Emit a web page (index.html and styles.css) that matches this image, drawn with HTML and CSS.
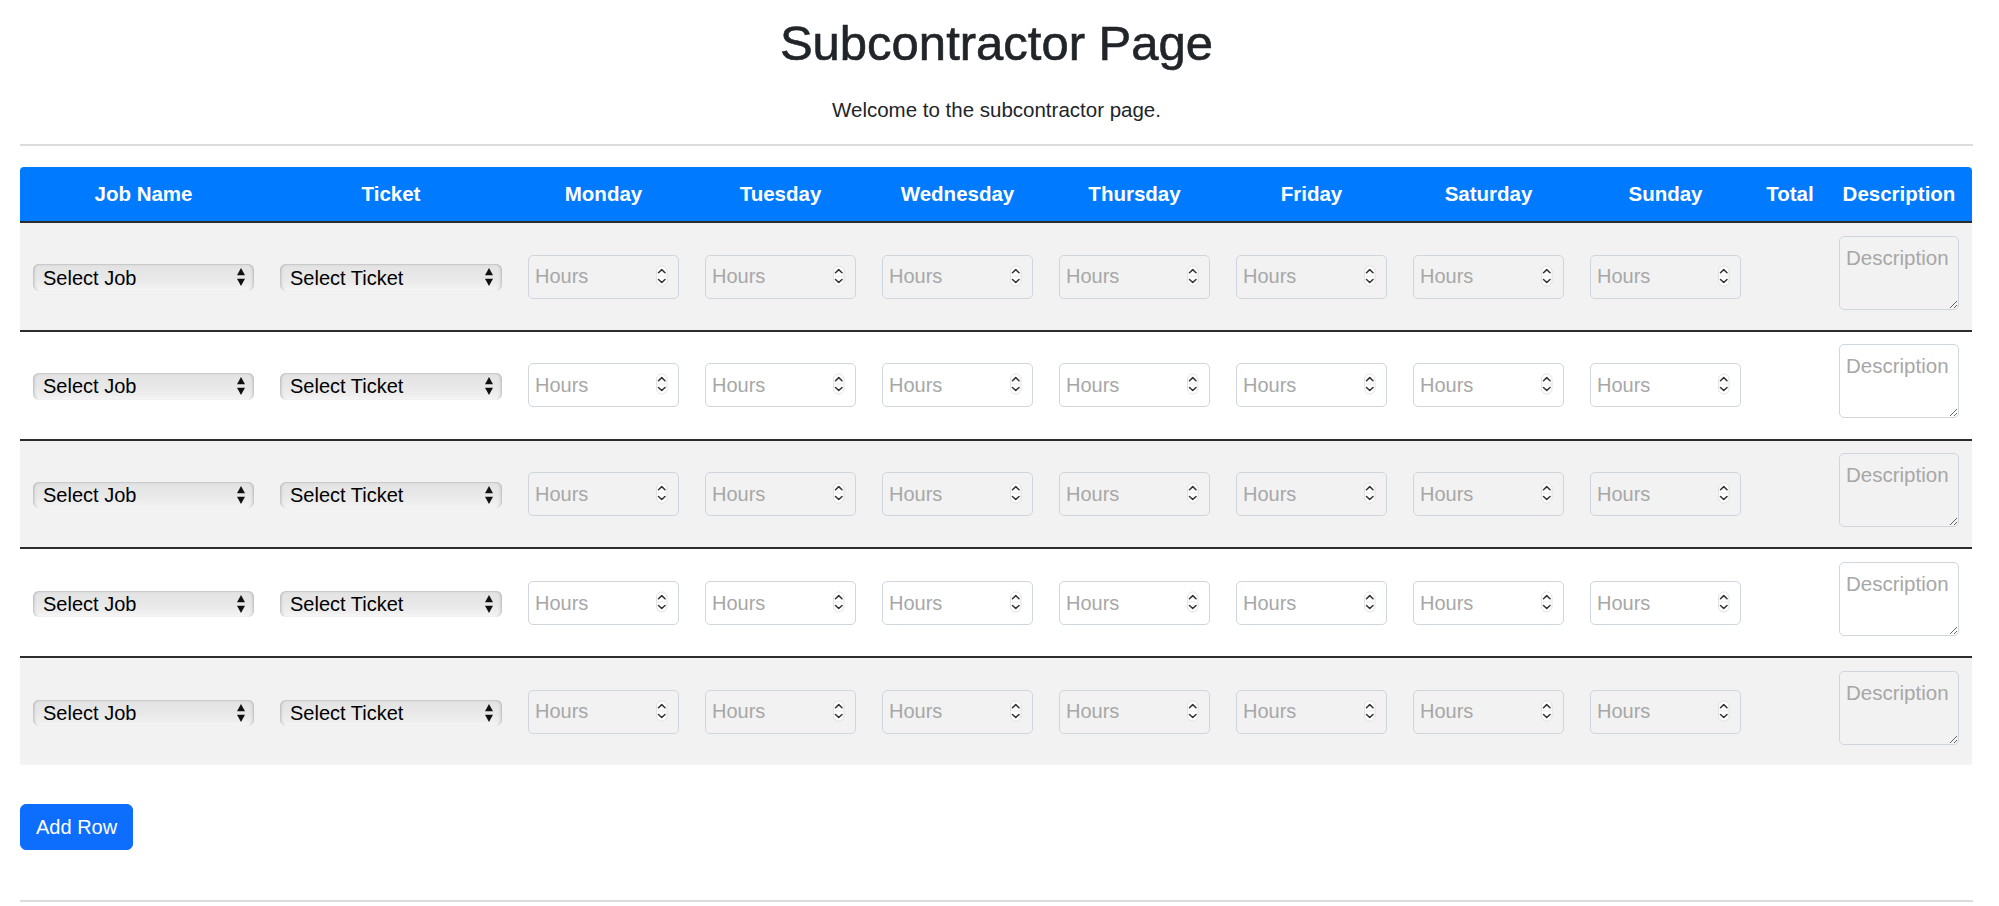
FILE: index.html
```html
<!DOCTYPE html>
<html lang="en">
<head>
<meta charset="utf-8">
<title>Subcontractor Page</title>
<link rel="stylesheet" href="styles.css">
</head>
<body>
<div class="page">
  <h1 class="title">Subcontractor Page</h1>
  <p class="lead">Welcome to the subcontractor page.</p>
  <hr class="rule rule-top">

  <div class="table-wrap">
    <table class="timesheet">
      <colgroup>
        <col class="c-job"><col class="c-ticket">
        <col class="c-day"><col class="c-day"><col class="c-day"><col class="c-day"><col class="c-day"><col class="c-day"><col class="c-day">
        <col class="c-total"><col class="c-desc">
      </colgroup>
      <thead>
        <tr>
          <th>Job Name</th><th>Ticket</th><th>Monday</th><th>Tuesday</th><th>Wednesday</th><th>Thursday</th><th>Friday</th><th>Saturday</th><th>Sunday</th><th>Total</th><th>Description</th>
        </tr>
      </thead>
      <tbody id="rows"></tbody>
    </table>
  </div>

  <button class="btn-add" type="button">Add Row</button>
  <hr class="rule rule-bottom">
</div>

<template id="row-tpl">
  <tr>
    <td><span class="sel-wrap"><select class="sel"><option>Select Job</option></select><svg class="sel-arrows" viewBox="0 0 8 18" width="8" height="18"><polygon points="0,7.2 4,0 8,7.2" fill="#111"/><polygon points="0,10.8 8,10.8 4,18" fill="#111"/></svg></span></td>
    <td><span class="sel-wrap"><select class="sel"><option>Select Ticket</option></select><svg class="sel-arrows" viewBox="0 0 8 18" width="8" height="18"><polygon points="0,7.2 4,0 8,7.2" fill="#111"/><polygon points="0,10.8 8,10.8 4,18" fill="#111"/></svg></span></td>
    <td class="day"></td><td class="day"></td><td class="day"></td><td class="day"></td><td class="day"></td><td class="day"></td><td class="day"></td>
    <td class="total"></td>
    <td class="desc"><textarea class="desc-input" placeholder="Description"></textarea></td>
  </tr>
</template>

<template id="hours-tpl">
  <span class="num-wrap"><input class="num" type="number" placeholder="Hours"><svg class="spin" viewBox="0 0 12 22" width="12" height="22"><rect x="0.5" y="0.5" width="11" height="21" rx="5.5" fill="#fff" stroke="#d4d4d4" stroke-width="0.7"/><line x1="1.5" y1="11" x2="10.5" y2="11" stroke="#e2e2e2" stroke-width="0.8"/><polyline points="2.6,7.6 6,4.4 9.4,7.6" fill="none" stroke="#333" stroke-width="1.6" stroke-linecap="round" stroke-linejoin="round"/><polyline points="2.6,14.6 6,17.8 9.4,14.6" fill="none" stroke="#333" stroke-width="1.6" stroke-linecap="round" stroke-linejoin="round"/></svg></span>
</template>

<script src="script.js"></script>
</body>
</html>
```

FILE: script.js
```javascript
(function () {
  var body = document.getElementById('rows');
  var rowTpl = document.getElementById('row-tpl');
  var hoursTpl = document.getElementById('hours-tpl');
  function addRow() {
    var row = rowTpl.content.firstElementChild.cloneNode(true);
    row.querySelectorAll('td.day').forEach(function (td) {
      td.appendChild(hoursTpl.content.firstElementChild.cloneNode(true));
    });
    body.appendChild(row);
  }
  for (var i = 0; i < 5; i++) addRow();
  document.querySelector('.btn-add').addEventListener('click', addRow);
})();
```

FILE: styles.css
```css
* { box-sizing: border-box; }

html, body {
  margin: 0;
  padding: 0;
  background: #ffffff;
}

body {
  font-family: "Liberation Sans", Arial, sans-serif;
  color: #212529;
}

.page {
  margin-left: 20px;
  width: 1953px;
  display: flex;
  flex-direction: column;
}

.title {
  margin: 13.5px 0 0;
  font-size: 49px;
  line-height: 59px;
  font-weight: 400;
  text-align: center;
  color: #212529;
  -webkit-text-stroke: 0.6px #212529;
}

.lead {
  margin: 22px 0 0;
  font-size: 20.5px;
  line-height: 30px;
  text-align: center;
}

.rule {
  width: 100%;
  height: 0;
  margin: 0;
  border: 0;
  border-top: 2px solid #dcdcdc;
}

.rule-top { margin-top: 19px; }
.rule-bottom { margin-top: 50px; }

.table-wrap {
  margin-top: 21.5px;
  width: 1952px;
  border-radius: 4px 4px 3px 3px;
  overflow: hidden;
}

.timesheet {
  width: 1952px;
  table-layout: fixed;
  border-collapse: separate;
  border-spacing: 0;
}

.c-job { width: 247px; }
.c-ticket { width: 248px; }
.c-day { width: 177px; }
.c-total { width: 72px; }
.c-desc { width: 146px; }

.timesheet th {
  background: #007bff;
  color: #ffffff;
  font-weight: 700;
  font-size: 20.5px;
  line-height: 30px;
  padding: 12px 4px;
  text-align: center;
  white-space: nowrap;
}

.timesheet td {
  padding: 12.5px 13px 12px;
  vertical-align: middle;
  border-top: 2px solid #2d2d2d;
  background: #ffffff;
}

.timesheet tbody tr:nth-child(odd) td { background: #f2f2f2; }

/* select */
.sel-wrap {
  position: relative;
  display: block;
  width: 100%;
  margin-top: 2px;
}

.sel {
  display: block;
  width: 100%;
  height: 26.5px;
  margin: 0;
  padding: 0 22px 0 10px;
  -webkit-appearance: none;
  appearance: none;
  border: 0;
  border-radius: 6px;
  font-family: "Liberation Sans", Arial, sans-serif;
  font-size: 20px;
  line-height: 26px;
  color: #000;
  background: linear-gradient(to bottom, #d9d9d9 0%, #e4e4e4 12%, #e8e8e8 50%, #eeeeee 80%, #f6f6f6 100%);
  box-shadow: inset 3px 0 3px -2px rgba(0,0,0,0.22), inset -3px 0 3px -2px rgba(0,0,0,0.22), inset 0 1px 0 rgba(0,0,0,0.06);
}

.sel-arrows {
  position: absolute;
  right: 9px;
  top: 4px;
  width: 8px;
  height: 18px;
  pointer-events: none;
}

/* number inputs */
.num-wrap {
  position: relative;
  display: block;
  width: 100%;
}

.num {
  display: block;
  width: 100%;
  height: 44px;
  margin: 0;
  padding: 6px 26px 6px 6px;
  border: 1px solid #cfd6de;
  border-radius: 5px;
  background: transparent;
  font-family: "Liberation Sans", Arial, sans-serif;
  font-size: 20px;
  line-height: 30px;
  color: #212529;
  -moz-appearance: textfield;
}

.num::-webkit-inner-spin-button,
.num::-webkit-outer-spin-button {
  -webkit-appearance: none;
  margin: 0;
}

.num::placeholder,
.desc-input::placeholder {
  color: #a7a7a7;
  opacity: 1;
}

.spin {
  position: absolute;
  right: 11.5px;
  top: 10px;
  width: 11.5px;
  height: 22px;
  pointer-events: none;
}

/* description */
.desc-input {
  display: block;
  width: 100%;
  height: 74px;
  margin: 0 0 8.3px;
  padding: 6px 6px;
  border: 1px solid #cfd6de;
  border-radius: 5px;
  background: transparent;
  font-family: "Liberation Sans", Arial, sans-serif;
  font-size: 20.5px;
  line-height: 30px;
  color: #212529;
  overflow: hidden;
}

.btn-add {
  align-self: flex-start;
  margin-top: 39.5px;
  padding: 7px 15px;
  border: 1px solid #0d6efd;
  border-radius: 6px;
  background: #0d6efd;
  color: #ffffff;
  font-family: "Liberation Sans", Arial, sans-serif;
  font-size: 20px;
  line-height: 30px;
  cursor: pointer;
}
```
